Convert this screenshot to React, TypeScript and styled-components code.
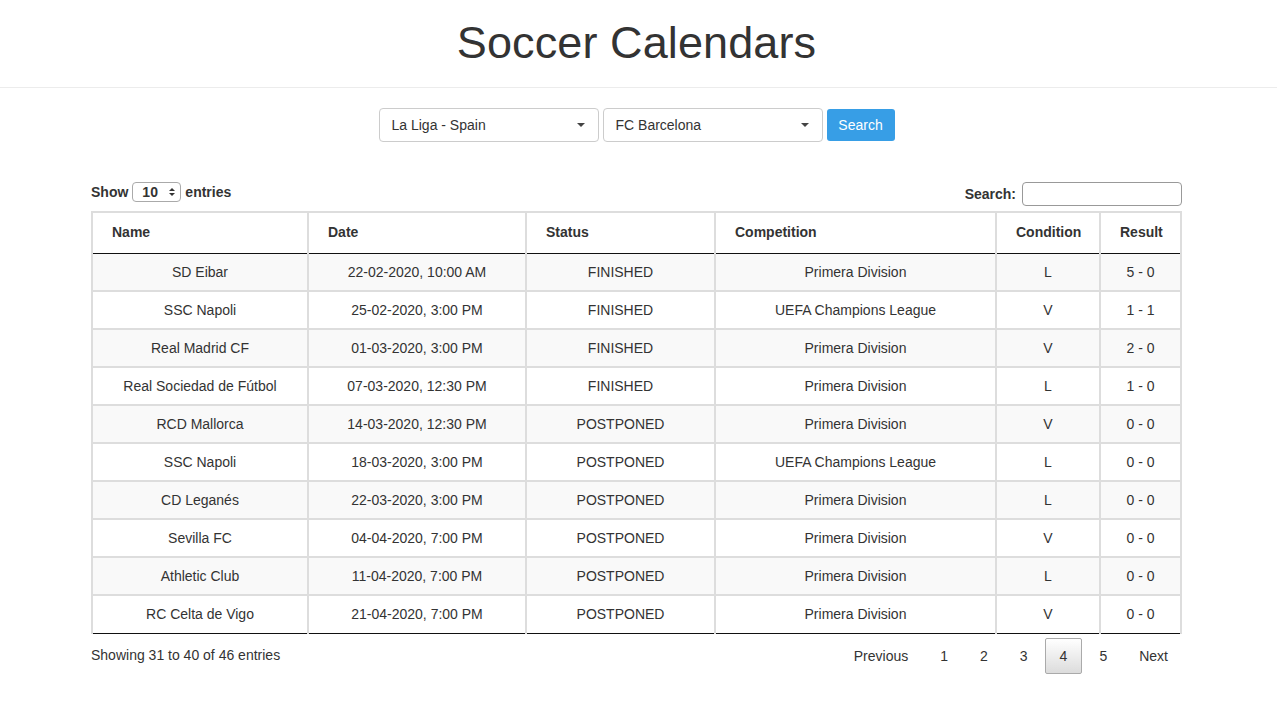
import React from "react";
import styled, { createGlobalStyle } from "styled-components";

const Global = createGlobalStyle`
  html, body { margin: 0; padding: 0; background: #fff; }
  body { font-family: "Liberation Sans", Arial, Helvetica, sans-serif; color: #333; font-size: 14px; }
  * { box-sizing: border-box; }
`;

const Header = styled.header`
  height: 88px;
  border-bottom: 1px solid #ececec;
  display: flex;
  align-items: center;
  justify-content: center;
`;

const Title = styled.h1`
  margin: 0;
  font-size: 45px;
  font-weight: 400;
  color: #333;
  letter-spacing: 0.1px;
  padding-bottom: 2px;
  padding-right: 4px;
`;

const Controls = styled.div`
  display: flex;
  justify-content: center;
  align-items: center;
  gap: 4px;
  margin-top: 20px;
  padding-right: 4px;
`;

const SelectBox = styled.div`
  width: 220px;
  height: 34px;
  border: 1px solid #ccc;
  border-radius: 4px;
  display: flex;
  align-items: center;
  justify-content: space-between;
  padding: 0 12px;
  font-size: 14px;
  color: #333;
  background: #fff;
`;

const Caret = styled.span`
  width: 0;
  height: 0;
  border-left: 4px solid transparent;
  border-right: 4px solid transparent;
  border-top: 4px solid #444;
  margin-right: 1px;
`;

const Button = styled.button`
  height: 32px;
  width: 68px;
  border: none;
  border-radius: 3px;
  background: #379ee6;
  color: #fff;
  font-family: inherit;
  font-size: 14px;
  padding: 0;
`;

const Wrapper = styled.div`
  width: 1091px;
  margin: 39px auto 0;
  position: relative;
  left: -2px;
`;

const TopBar = styled.div`
  display: flex;
  justify-content: space-between;
  align-items: flex-end;
  height: 25px;
  margin-bottom: 5px;
`;

const LengthLabel = styled.label`
  font-weight: bold;
  font-size: 14px;
  display: flex;
  align-items: center;
  gap: 4px;
  align-self: center;
  margin-top: -3px;
`;

const MiniSelect = styled.span`
  display: inline-flex;
  align-items: center;
  justify-content: space-between;
  width: 49px;
  height: 20px;
  border: 1px solid #aaa;
  border-radius: 4px;
  padding: 0 5px 0 9px;
  font-weight: bold;
  font-size: 14px;
`;

const Arrows = styled.span`
  display: inline-flex;
  flex-direction: column;
  gap: 2px;
`;

const ArrowUp = styled.span`
  width: 0;
  height: 0;
  border-left: 3px solid transparent;
  border-right: 3px solid transparent;
  border-bottom: 3px solid #333;
`;

const ArrowDown = styled(ArrowUp)`
  border-bottom: none;
  border-top: 3px solid #333;
`;

const SearchLabel = styled.label`
  font-weight: bold;
  display: flex;
  align-items: center;
  gap: 6px;
`;

const SearchInput = styled.span`
  display: inline-block;
  width: 160px;
  height: 24px;
  border: 1px solid #999;
  border-radius: 4px;
`;

const Table = styled.table`
  width: 100%;
  border-collapse: collapse;
  table-layout: fixed;
  border-left: 2px solid #ddd;
  border-top: 2px solid #ddd;
  border-bottom: 1px solid #111;
`;

const Th = styled.th<{ $w: number }>`
  width: ${(p) => p.$w}px;
  height: 41px;
  text-align: left;
  padding: 0 18px 2px 19px;
  font-weight: bold;
  font-size: 14px;
  border-right: 2px solid #ddd;
  border-bottom: 1px solid #111;
`;

const Tr = styled.tr<{ $odd: boolean }>`
  background: ${(p) => (p.$odd ? "#f9f9f9" : "#fff")};
`;

const Td = styled.td`
  height: 38px;
  text-align: center;
  padding: 0 10px;
  font-size: 14px;
  color: #333;
  border-right: 2px solid #ddd;
  border-top: 2px solid #ddd;
`;

const FirstRowTd = styled(Td)`
  border-top: none;
`;

const Footer = styled.div`
  display: flex;
  justify-content: space-between;
  align-items: center;
  margin-top: 4px;
`;

const Info = styled.div`
  font-size: 14px;
  color: #333;
  margin-top: -1px;
`;

const Pager = styled.div`
  display: flex;
  align-items: center;
  margin-right: -1px;
`;

const PageBtn = styled.span<{ $current?: boolean }>`
  display: inline-flex;
  align-items: center;
  justify-content: center;
  height: 36px;
  padding: 0 14px;
  margin-left: 2px;
  font-size: 14px;
  color: #333;
  border-radius: 2px;
  border: 1px solid ${(p) => (p.$current ? "#aaa" : "transparent")};
  background: ${(p) => (p.$current ? "linear-gradient(to bottom, #fff 0%, #dcdcdc 100%)" : "transparent")};
`;

const columns = [
  { name: "Name", w: 216 },
  { name: "Date", w: 218 },
  { name: "Status", w: 189 },
  { name: "Competition", w: 281 },
  { name: "Condition", w: 104 },
  { name: "Result", w: 81 },
];

const rows = [
  ["SD Eibar", "22-02-2020, 10:00 AM", "FINISHED", "Primera Division", "L", "5 - 0"],
  ["SSC Napoli", "25-02-2020, 3:00 PM", "FINISHED", "UEFA Champions League", "V", "1 - 1"],
  ["Real Madrid CF", "01-03-2020, 3:00 PM", "FINISHED", "Primera Division", "V", "2 - 0"],
  ["Real Sociedad de Fútbol", "07-03-2020, 12:30 PM", "FINISHED", "Primera Division", "L", "1 - 0"],
  ["RCD Mallorca", "14-03-2020, 12:30 PM", "POSTPONED", "Primera Division", "V", "0 - 0"],
  ["SSC Napoli", "18-03-2020, 3:00 PM", "POSTPONED", "UEFA Champions League", "L", "0 - 0"],
  ["CD Leganés", "22-03-2020, 3:00 PM", "POSTPONED", "Primera Division", "L", "0 - 0"],
  ["Sevilla FC", "04-04-2020, 7:00 PM", "POSTPONED", "Primera Division", "V", "0 - 0"],
  ["Athletic Club", "11-04-2020, 7:00 PM", "POSTPONED", "Primera Division", "L", "0 - 0"],
  ["RC Celta de Vigo", "21-04-2020, 7:00 PM", "POSTPONED", "Primera Division", "V", "0 - 0"],
];

export default function App() {
  return (
    <>
      <Global />
      <Header>
        <Title>Soccer Calendars</Title>
      </Header>
      <Controls>
        <SelectBox>
          <span>La Liga - Spain</span>
          <Caret />
        </SelectBox>
        <SelectBox>
          <span>FC Barcelona</span>
          <Caret />
        </SelectBox>
        <Button>Search</Button>
      </Controls>
      <Wrapper>
        <TopBar>
          <LengthLabel>
            Show
            <MiniSelect>
              10
              <Arrows>
                <ArrowUp />
                <ArrowDown />
              </Arrows>
            </MiniSelect>
            entries
          </LengthLabel>
          <SearchLabel>
            Search:
            <SearchInput />
          </SearchLabel>
        </TopBar>
        <Table>
          <thead>
            <tr>
              {columns.map((c) => (
                <Th key={c.name} $w={c.w}>
                  {c.name}
                </Th>
              ))}
            </tr>
          </thead>
          <tbody>
            {rows.map((r, i) => (
              <Tr key={i} $odd={i % 2 === 0}>
                {r.map((cell, j) =>
                  i === 0 ? <FirstRowTd key={j}>{cell}</FirstRowTd> : <Td key={j}>{cell}</Td>
                )}
              </Tr>
            ))}
          </tbody>
        </Table>
        <Footer>
          <Info>Showing 31 to 40 of 46 entries</Info>
          <Pager>
            <PageBtn>Previous</PageBtn>
            <PageBtn>1</PageBtn>
            <PageBtn>2</PageBtn>
            <PageBtn>3</PageBtn>
            <PageBtn $current>4</PageBtn>
            <PageBtn>5</PageBtn>
            <PageBtn>Next</PageBtn>
          </Pager>
        </Footer>
      </Wrapper>
    </>
  );
}
